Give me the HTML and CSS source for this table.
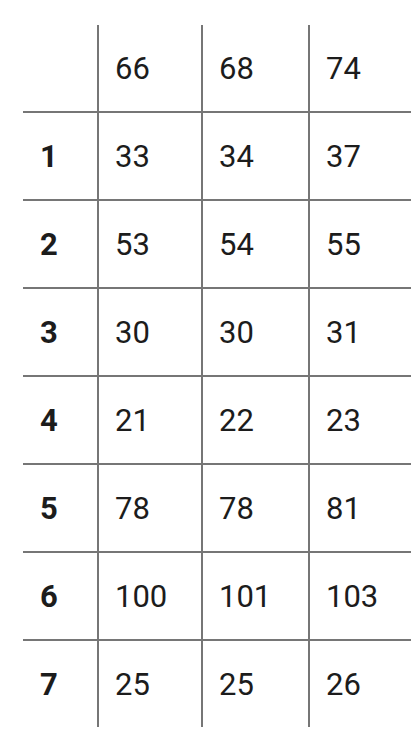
FILE: index.html
```html
<!DOCTYPE html>
<html lang="en">
<head>
<meta charset="utf-8">
<title>Table</title>
<link rel="stylesheet" href="styles.css">
</head>
<body>
<table class="grid">
  <tbody>
    <tr><th class="rh"></th><td>66</td><td>68</td><td>74</td></tr>
    <tr><th class="rh">1</th><td>33</td><td>34</td><td>37</td></tr>
    <tr><th class="rh">2</th><td>53</td><td>54</td><td>55</td></tr>
    <tr><th class="rh">3</th><td>30</td><td>30</td><td>31</td></tr>
    <tr><th class="rh">4</th><td>21</td><td>22</td><td>23</td></tr>
    <tr><th class="rh">5</th><td>78</td><td>78</td><td>81</td></tr>
    <tr><th class="rh">6</th><td>100</td><td>101</td><td>103</td></tr>
    <tr><th class="rh">7</th><td>25</td><td>25</td><td>26</td></tr>
  </tbody>
</table>
</body>
</html>
```
FILE: styles.css
```css
html, body {
  margin: 0;
  padding: 0;
  background: #ffffff;
}
body {
  padding: 25px 0 0 23px;
  overflow: hidden;
  font-family: Roboto, "Liberation Sans", sans-serif;
  color: #1c1c1c;
}
.grid {
  border-collapse: separate;
  border-spacing: 0;
  table-layout: fixed;
  width: 388px;
}
.grid th, .grid td {
  box-sizing: border-box;
  padding: 1px 0 0 16px;
  line-height: 85px;
  font-size: 31px;
  text-align: left;
  vertical-align: top;
  white-space: nowrap;
}
.grid th {
  font-weight: 700;
  width: 74px;
  padding-left: 17px;
}
.grid td {
  font-weight: 400;
  border-left: 2px solid #767676;
}
.grid td:nth-child(2) { width: 104px; }
.grid td:nth-child(3) { width: 107px; }
.grid td:nth-child(4) { width: 103px; }
.grid tr + tr th,
.grid tr + tr td {
  border-top: 2px solid #767676;
}
```
